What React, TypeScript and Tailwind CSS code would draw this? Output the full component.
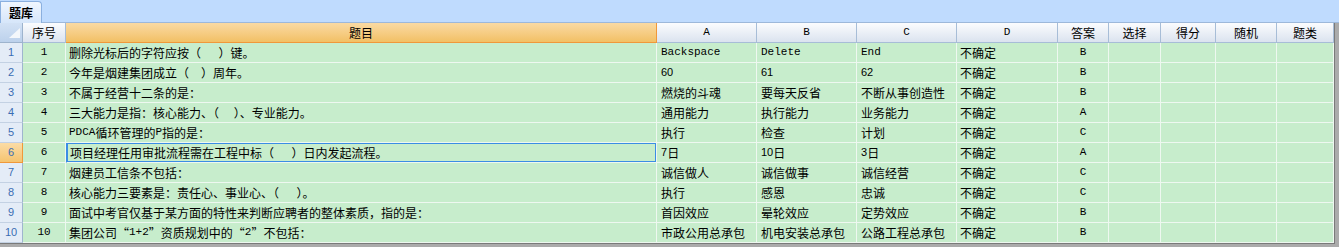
import React from 'react';

type Row = { q: string; a: string; b: string; c: string; d: string; ans: string };

const rows: Row[] = [
  { q: '删除光标后的字符应按（\u3000  ）键。', a: 'Backspace', b: 'Delete', c: 'End', d: '不确定', ans: 'B' },
  { q: '今年是烟建集团成立（\u3000）周年。', a: '60', b: '61', c: '62', d: '不确定', ans: 'B' },
  { q: '不属于经营十二条的是：', a: '燃烧的斗魂', b: '要每天反省', c: '不断从事创造性', d: '不确定', ans: 'B' },
  { q: '三大能力是指：核心能力、（\u3000 ）、专业能力。', a: '通用能力', b: '执行能力', c: '业务能力', d: '不确定', ans: 'A' },
  { q: 'PDCA循环管理的P指的是：', a: '执行', b: '检查', c: '计划', d: '不确定', ans: 'C' },
  { q: '项目经理任用审批流程需在工程中标（\u3000  ）日内发起流程。', a: '7日', b: '10日', c: '3日', d: '不确定', ans: 'A' },
  { q: '烟建员工信条不包括：', a: '诚信做人', b: '诚信做事', c: '诚信经营', d: '不确定', ans: 'C' },
  { q: '核心能力三要素是：责任心、事业心、（\u3000  ）。', a: '执行', b: '感恩', c: '忠诚', d: '不确定', ans: 'C' },
  { q: '面试中考官仅基于某方面的特性来判断应聘者的整体素质，指的是：', a: '首因效应', b: '晕轮效应', c: '定势效应', d: '不确定', ans: 'B' },
  { q: '集团公司“1+2”资质规划中的“2”不包括：', a: '市政公用总承包', b: '机电安装总承包', c: '公路工程总承包', d: '不确定', ans: 'B' },
];

const mono = "font-['Liberation_Mono',monospace] text-[11px]";
const sans = "font-['Liberation_Sans',sans-serif] text-[11px]";

// latin runs get their own font, like the old grid control does
const Mixed = ({ text, digits = mono }: { text: string; digits?: string }) => (
  <>
    {text.split(/([A-Za-z0-9+]+)/).map((part, i) => {
      if (!part) return null;
      if (/^[A-Za-z+]+$/.test(part)) return <span key={i} className={mono}>{part}</span>;
      if (/^[0-9+]+$/.test(part)) return <span key={i} className={digits}>{part}</span>;
      if (/^[A-Za-z0-9+]+$/.test(part)) return <span key={i} className={mono}>{part}</span>;
      return <span key={i}>{part}</span>;
    })}
  </>
);

const headCell =
  'flex items-center justify-center border-r border-b border-[#a7bdd7] bg-linear-to-b from-[#fbfcfe] to-[#dbe3ef]';
const cell = 'flex items-center border-r border-b border-[#eef8f0] bg-[#c7edcc] whitespace-pre overflow-hidden';

const App = () => {
  return (
    <div className="w-[1339px] h-[247px] bg-[#ababab] font-['Noto_Sans_CJK_SC',sans-serif] text-[12px] text-black leading-none">
      <div className="h-[23px] bg-[#bfdbfe] border-b border-[#9db8da] flex items-end">
        <div className="h-[22px] -mb-px w-[42px] flex items-center justify-center border border-b-0 border-[#8bb0df] rounded-tr-[4px] bg-linear-to-b from-[#f0f6fe] to-[#d6e6fa] font-bold text-[12px]">
          题库
        </div>
      </div>

      <div className="flex">
        <div className="grid grid-cols-[23px_43px_591px_100px_100px_100px_101px_51px_52px_55px_61px_57px] auto-rows-[20px] border-r border-b border-[#7a7a7a]">
          <div className="relative border-r border-b border-[#9db3cd] bg-linear-to-b from-[#d3e2f5] to-[#bcd1ec]">
            <svg className="absolute left-[9px] top-[5px]" width="11" height="10" viewBox="0 0 11 10">
              <polygon points="11,0 11,10 0,10" fill="#f4f7fb" />
            </svg>
          </div>
          <div className={headCell}>序号</div>
          <div className="flex items-center justify-center border-r border-b border-[#f0983a] bg-linear-to-b from-[#fadaa3] to-[#f2c064]">题目</div>
          {['A', 'B', 'C', 'D'].map((l) => (
            <div key={l} className={headCell}>
              <span className={mono}>{l}</span>
            </div>
          ))}
          {['答案', '选择', '得分', '随机', '题类'].map((h) => (
            <div key={h} className={headCell}>{h}</div>
          ))}

          {rows.map((r, i) => {
            const sel = i === 5;
            return (
              <React.Fragment key={i}>
                <div
                  className={
                    sel
                      ? "flex items-center justify-center border-r border-b border-[#f0983a] bg-linear-to-b from-[#fbdca6] to-[#f5c46f] text-[#3a6db3] font-['Liberation_Sans',sans-serif] text-[11px]"
                      : "flex items-center justify-center border-r border-b border-r-[#9fb5cf] border-b-[#c3d1e3] bg-[#e4ecf7] text-[#3a6db3] font-['Liberation_Sans',sans-serif] text-[11px]"
                  }
                >
                  {i + 1}
                </div>
                <div className={cell + ' justify-center'}>
                  <span className={mono}>{i + 1}</span>
                </div>
                <div className={cell + ' pl-[3px]' + (sel ? ' ring-1 ring-inset ring-[#3b8de4] border-l border-l-[#3b8de4]' : '')}>
                  <Mixed text={r.q} />
                </div>
                {[r.a, r.b, r.c].map((o, j) => (
                  <div key={j} className={cell + ' pl-[4px]'}>
                    <Mixed text={o} digits={sans} />
                  </div>
                ))}
                <div className={cell + ' pl-[3px]'}>{r.d}</div>
                <div className={cell + ' justify-center'}>
                  <span className={mono}>{r.ans}</span>
                </div>
                <div className={cell} />
                <div className={cell} />
                <div className={cell} />
                <div className={cell} />
              </React.Fragment>
            );
          })}
        </div>
      </div>
    </div>
  );
};

export default App;
